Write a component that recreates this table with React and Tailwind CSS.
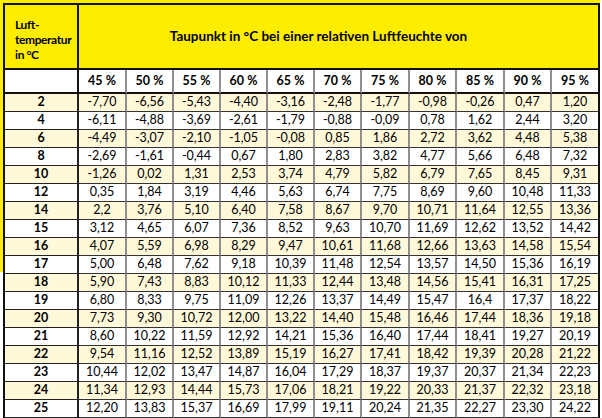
const hum = ["45", "50", "55", "60", "65", "70", "75", "80", "85", "90", "95"];

const rows = [
  ["2", "-7,70", "-6,56", "-5,43", "-4,40", "-3,16", "-2,48", "-1,77", "-0,98", "-0,26", "0,47", "1,20"],
  ["4", "-6,11", "-4,88", "-3,69", "-2,61", "-1,79", "-0,88", "-0,09", "0,78", "1,62", "2,44", "3,20"],
  ["6", "-4,49", "-3,07", "-2,10", "-1,05", "-0,08", "0,85", "1,86", "2,72", "3,62", "4,48", "5,38"],
  ["8", "-2,69", "-1,61", "-0,44", "0,67", "1,80", "2,83", "3,82", "4,77", "5,66", "6,48", "7,32"],
  ["10", "-1,26", "0,02", "1,31", "2,53", "3,74", "4,79", "5,82", "6,79", "7,65", "8,45", "9,31"],
  ["12", "0,35", "1,84", "3,19", "4,46", "5,63", "6,74", "7,75", "8,69", "9,60", "10,48", "11,33"],
  ["14", "2,2", "3,76", "5,10", "6,40", "7,58", "8,67", "9,70", "10,71", "11,64", "12,55", "13,36"],
  ["15", "3,12", "4,65", "6,07", "7,36", "8,52", "9,63", "10,70", "11,69", "12,62", "13,52", "14,42"],
  ["16", "4,07", "5,59", "6,98", "8,29", "9,47", "10,61", "11,68", "12,66", "13,63", "14,58", "15,54"],
  ["17", "5,00", "6,48", "7,62", "9,18", "10,39", "11,48", "12,54", "13,57", "14,50", "15,36", "16,19"],
  ["18", "5,90", "7,43", "8,83", "10,12", "11,33", "12,44", "13,48", "14,56", "15,41", "16,31", "17,25"],
  ["19", "6,80", "8,33", "9,75", "11,09", "12,26", "13,37", "14,49", "15,47", "16,4", "17,37", "18,22"],
  ["20", "7,73", "9,30", "10,72", "12,00", "13,22", "14,40", "15,48", "16,46", "17,44", "18,36", "19,18"],
  ["21", "8,60", "10,22", "11,59", "12,92", "14,21", "15,36", "16,40", "17,44", "18,41", "19,27", "20,19"],
  ["22", "9,54", "11,16", "12,52", "13,89", "15,19", "16,27", "17,41", "18,42", "19,39", "20,28", "21,22"],
  ["23", "10,44", "12,02", "13,47", "14,87", "16,04", "17,29", "18,37", "19,37", "20,37", "21,34", "22,23"],
  ["24", "11,34", "12,93", "14,44", "15,73", "17,06", "18,21", "19,22", "20,33", "21,37", "22,32", "23,18"],
  ["25", "12,20", "13,83", "15,37", "16,69", "17,99", "19,11", "20,24", "21,35", "22,27", "23,30", "24,22"],
];

const grid =
  "grid grid-cols-[74px_48px_47px_47px_47px_47px_47px_48px_47px_48px_47px_48px]";

export default function App() {
  return (
    <div className="h-[418px] w-[602px] overflow-hidden bg-white font-['Lato',sans-serif] text-[12.5px] text-black">
      <div className="h-[3px] w-[600px] bg-[#ffed00]" />
      <div className="flex">
        <div className="h-[269px] w-[3px] shrink-0 bg-[#ffed00]" />

        <div className="w-[597px] border-l-2 border-t-2 border-[#111]">
          {/* yellow title row */}
          <div className={grid}>
            <div className="flex h-[65px] flex-col justify-center border-b-2 border-r-2 border-[#111] bg-[#ffed00] pl-[10px] pt-[6px] text-[12px] font-bold leading-[15px] tracking-[-0.4px]">
              <span>Luft-</span>
              <span>temperatur</span>
              <span>in °C</span>
            </div>
            <div className="col-span-11 flex h-[65px] items-center justify-center border-b-2 border-r-2 border-[#111] bg-[#ffed00] pr-[40px] text-[13.5px] font-bold">
              Taupunkt in °C bei einer relativen Luftfeuchte von
            </div>
          </div>

          {/* humidity header */}
          <div className={grid}>
            <div className="h-[24px] border-b-2 border-r-2 border-[#111]" />
            {hum.map((h, i) => (
              <div
                key={h}
                className={
                  i === hum.length - 1
                    ? "flex h-[24px] items-center justify-center border-b-2 border-r-2 border-[#111] font-bold"
                    : "flex h-[24px] items-center justify-center border-b-2 border-r-2 border-b-[#111] border-r-[#8f8f8f] font-bold"
                }
              >
                {h} %
              </div>
            ))}
          </div>

          {/* data rows */}
          {rows.map((r, ri) => (
            <div
              key={r[0]}
              className={`${grid} ${ri % 2 === 0 ? "bg-[#fff9d9]" : "bg-white"}`}
            >
              <div className="flex h-[18px] items-center justify-center border-b border-r-2 border-[#222] font-bold">
                {r[0]}
              </div>
              {r.slice(1).map((v, ci) => (
                <div
                  key={ci}
                  className={
                    ci === 10
                      ? "flex h-[18px] items-center justify-center border-b border-r-2 border-b-[#333] border-r-[#111]"
                      : "flex h-[18px] items-center justify-center border-b border-r-2 border-b-[#333] border-r-[#8f8f8f]"
                  }
                >
                  {v}
                </div>
              ))}
            </div>
          ))}
        </div>
      </div>
    </div>
  );
}
